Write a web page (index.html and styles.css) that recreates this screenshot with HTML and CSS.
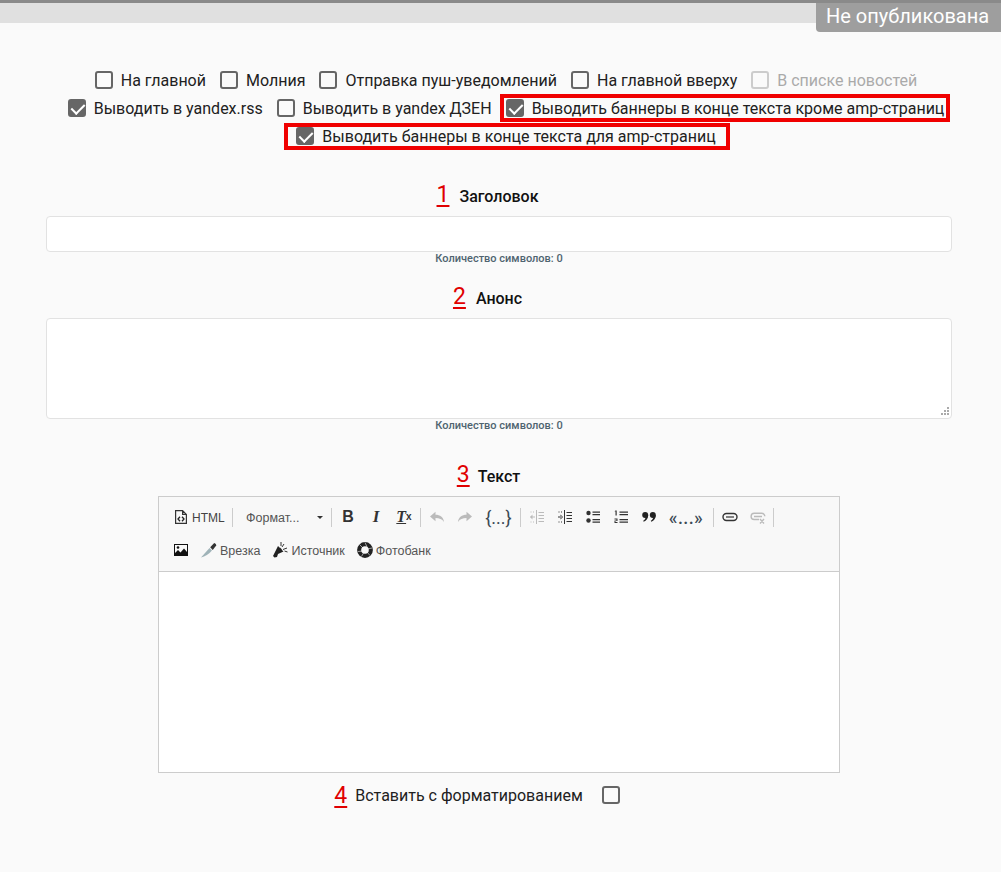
FILE: index.html
```html
<!DOCTYPE html>
<html lang="ru">
<head>
<meta charset="utf-8">
<title>Новость</title>
<link rel="stylesheet" href="styles.css">
</head>
<body>
<header class="topbar"><div class="status">Не опубликована</div></header>
<main class="page">
  <section class="options">
    <div class="opt-row">
      <label class="opt"><input class="cb" type="checkbox"><span>На главной</span></label>
      <label class="opt"><input class="cb" type="checkbox"><span>Молния</span></label>
      <label class="opt"><input class="cb" type="checkbox"><span>Отправка пуш-уведомлений</span></label>
      <label class="opt"><input class="cb" type="checkbox"><span>На главной вверху</span></label>
      <label class="opt opt-off"><input class="cb" type="checkbox" disabled><span>В списке новостей</span></label>
    </div>
    <div class="opt-row">
      <label class="opt"><input class="cb" type="checkbox" checked><span>Выводить в yandex.rss</span></label>
      <label class="opt"><input class="cb" type="checkbox"><span>Выводить в yandex ДЗЕН</span></label>
      <label class="opt mark-a"><input class="cb" type="checkbox" checked><span>Выводить баннеры в конце текста кроме amp-страниц</span></label>
    </div>
    <div class="opt-row">
      <label class="opt mark-b"><input class="cb" type="checkbox" checked><span>Выводить баннеры в конце текста для amp-страниц</span></label>
    </div>
  </section>

  <section class="field field-title">
    <h2 class="label"><span class="num">1</span>Заголовок</h2>
    <div class="input"></div>
    <p class="count">Количество символов: 0</p>
  </section>

  <section class="field field-lead">
    <h2 class="label"><span class="num">2</span>Анонс</h2>
    <div class="input area">
      <svg class="grip" width="9" height="9" viewBox="0 0 9 9"><path fill="#aaa" d="M7 0h2v2H7zM4 3h2v2H4zM7 3h2v2H7zM1 6h2v2H1zM4 6h2v2H4zM7 6h2v2H7z"/></svg>
    </div>
    <p class="count">Количество символов: 0</p>
  </section>

  <section class="field field-text">
    <h2 class="label"><span class="num num-3">3</span>Текст</h2>
    <div class="editor">
      <div class="toolbar">
        <div class="tb-row">
          <span class="btn btn-html">
            <svg width="14" height="16" viewBox="0 0 14 16"><path fill="none" stroke="#333" stroke-width="1.200" d="M1.600 1.600h7l3.800 3.800v9H1.600zM8.600 1.600v3.800h3.800"/><path fill="none" stroke="#222" stroke-width="1.300" d="M6 7.800 4 10l2 2.200M8 7.800l2 2.200-2 2.200"/></svg>
            <span class="t">HTML</span>
          </span>
          <i class="sep"></i>
          <span class="btn btn-format"><span class="t">Формат...</span><b class="caret"></b></span>
          <i class="sep"></i>
          <span class="btn ic-b">B</span>
          <span class="btn ic-i">I</span>
          <span class="btn ic-t"><span class="tx">T</span><sub>x</sub></span>
          <i class="sep"></i>
          <span class="btn"><svg width="16" height="16" viewBox="0 0 16 16"><path fill="#bbb" d="M1 7.500 6.500 2.800v3C11 5.800 14.500 8 15 13c-2-3-4.500-4-8.500-4v3.200z"/></svg></span>
          <span class="btn"><svg width="16" height="16" viewBox="0 0 16 16"><path fill="#bbb" d="M15 7.500 9.500 2.800v3C5 5.800 1.500 8 1 13c2-3 4.500-4 8.500-4v3.200z"/></svg></span>
          <span class="btn btn-braces">{...}</span>
          <i class="sep"></i>
          <span class="btn"><svg width="16" height="16" viewBox="0 0 16 16"><path fill="#bbb" d="M7 1h1v14H7zM9.500 3H15v1H9.500zM9.500 6H15v1H9.500zM9.500 9H15v1H9.500zM9.500 12H15v1H9.500zM1 7.500h5v1H1zM1 8l2.500-2.500v5zM1.500 2.500h1v1h-1zM4 2.500h1v1H4zM1.500 12.500h1v1h-1zM4 12.500h1v1H4z"/></svg></span>
          <span class="btn"><svg width="16" height="16" viewBox="0 0 16 16"><path fill="#333" d="M7 1h1v14H7zM9.500 3H15v1H9.500zM9.500 6H15v1H9.500zM9.500 9H15v1H9.500zM9.500 12H15v1H9.500zM1 7.500h4v1H1zM6 8 3.500 5.500v5zM1.500 2.500h1v1h-1zM4 2.500h1v1H4zM1.500 12.500h1v1h-1zM4 12.500h1v1H4z"/></svg></span>
          <span class="btn"><svg width="16" height="16" viewBox="0 0 16 16"><circle fill="#333" cx="3.500" cy="4" r="2.200"/><circle fill="#333" cx="3.500" cy="11.500" r="2.200"/><path fill="#333" d="M7.500 2.500H15v1.200H7.500zM7.500 5H15v1.200H7.500zM7.500 10H15v1.200H7.500zM7.500 12.500H15v1.200H7.500z"/></svg></span>
          <span class="btn"><svg width="16" height="16" viewBox="0 0 16 16"><path fill="#333" d="M6.500 2.500H15v1.200H6.500zM6.500 5H15v1.200H6.500zM6.500 10H15v1.200H6.500zM6.500 12.500H15v1.200H6.500zM2.500 1.500h1.200v5H2.500zM1.500 2.200l1-.7v1zM1.500 9.500h3v2.500h-2v1h2v1h-3v-2.500h2v-1h-2z"/></svg></span>
          <span class="btn"><svg width="16" height="16" viewBox="0 0 16 16"><g fill="#222"><circle cx="4.200" cy="6" r="3"/><circle cx="11.800" cy="6" r="3"/><path d="M7.200 6c0 3.500-1.800 5.700-4.500 6.800l-.5-1C4 10.800 4.800 9 4.800 7zM14.800 6c0 3.500-1.800 5.700-4.500 6.800l-.5-1c1.800-1 2.600-2.800 2.600-4.800z"/></g></svg></span>
          <span class="btn btn-guil">«...»</span>
          <i class="sep"></i>
          <span class="btn"><svg width="16" height="16" viewBox="0 0 16 16"><rect x="1" y="4.500" width="14" height="7" rx="3.500" fill="none" stroke="#333" stroke-width="1.400"/><path stroke="#333" stroke-width="1.200" d="M4 8h8"/></svg></span>
          <span class="btn"><svg width="16" height="16" viewBox="0 0 16 16"><path fill="none" stroke="#bbb" stroke-width="1.400" d="M9 10.500H4.200a3 3 0 0 1 0-6.200h7.600a3 3 0 0 1 3 3M4 7.500h8M10 10l4 4.500M14 10l-4 4.500"/></svg></span>
          <i class="sep sep-last"></i>
        </div>
        <div class="tb-row">
          <span class="btn btn-img"><svg width="16" height="16" viewBox="0 0 16 16"><path fill="#111" fill-rule="evenodd" d="M1 2h14v12H1zM2 3v8l3-3 2.500 2.500L11 6.500l3 3.500V3z"/><circle fill="#111" cx="5" cy="5.500" r="1.300"/></svg></span>
          <span class="btn btn-txt"><svg width="16" height="16" viewBox="0 0 16 16"><path fill="#9fb3b8" d="M0 15.500 8.500 6 11 8.500C8 12 4 14.500 0 15.500z"/><path fill="#333" d="m9.200 5.300 4-4.300c1.500.5 2 1.500 2 2.500L11.700 8z"/></svg><span class="t">Врезка</span></span>
          <span class="btn btn-txt"><svg width="16" height="16" viewBox="0 0 16 16"><path fill="#222" d="M2.500 15.500 1 14l5-10 5.500 5.500L6 12l-1 3zM8 5.500l2 2-1 .5-1.500-1.500z"/><path fill="none" stroke="#333" d="M9 0v4M12 2l-2 3M15 6l-4 1.500M15.500 10l-3-1"/></svg><span class="t">Источник</span></span>
          <span class="btn btn-txt"><svg width="16" height="16" viewBox="0 0 16 16"><circle cx="8" cy="8" r="7.900" fill="#222"/><circle cx="8" cy="8" r="3.800" fill="#f8f8f8"/><path stroke="#f8f8f8" stroke-width=".6" d="M8 .5 10 5M15 6l-4.500 1M13 13.500 10 10M4.500 14.500 6.500 11M1 9.500l4.500-.5M2.500 2.500 6 6"/></svg><span class="t">Фотобанк</span></span>
        </div>
      </div>
      <div class="editor-body"></div>
    </div>
  </section>

  <section class="paste">
    <span class="paste-label"><span class="num num-4">4</span>Вставить с форматированием</span>
    <input class="cb" type="checkbox">
  </section>
</main>
</body>
</html>
```
FILE: styles.css
```css
* { box-sizing: border-box; }
html, body { margin: 0; }
body {
  height: 872px;
  overflow: hidden;
  background: #fafafa;
  font-family: Roboto, "Liberation Sans", sans-serif;
  font-size: 16px;
  color: #212121;
}
.topbar {
  position: relative;
  height: 23px;
  background: #e0e0e0;
  border-top: 3px solid #8a8a8a;
}
.status {
  position: absolute;
  top: 0;
  right: 0;
  width: 185px;
  height: 29px;
  padding-left: 10px;
  background: #9e9e9e;
  border-bottom-left-radius: 4px;
  color: #fff;
  font-size: 20px;
  line-height: 26px;
}
.page { padding: 0 46px; width: 998px; }
.options {
  width: 920px;
  padding-top: 48px;
  display: flex;
  flex-direction: column;
  gap: 10px;
}
.opt-row { display: flex; justify-content: center; gap: 14px; height: 18px; }
.opt { position: relative; display: flex; align-items: center; gap: 8px; white-space: nowrap; }
.opt span { padding-top: 1px; line-height: 18px; }
.opt-off { color: #aaa; }
.cb {
  appearance: none;
  position: relative;
  flex: none;
  width: 18px;
  height: 18px;
  margin: 0;
  background: transparent;
  border: 2px solid #666;
  border-radius: 3px;
}
.cb:disabled { border-color: #ccc; }
.cb:checked { background: #666; }
.cb:checked::after {
  content: "";
  position: absolute;
  left: 4px;
  top: 0;
  width: 6px;
  height: 11px;
  border: solid #fff;
  border-width: 0 2px 2px 0;
  transform: rotate(45deg);
}
.mark-a::after, .mark-b::after {
  content: "";
  position: absolute;
  border: 4px solid #f00000;
  pointer-events: none;
}
.mark-a::after { left: -6px; right: -6px; top: -5px; bottom: -5px; }
.mark-b::after { left: -12px; right: -14px; top: -4px; bottom: -5px; }

.field { width: 906px; display: flex; flex-direction: column; align-items: center; }
.field-title { margin-top: 42px; }
.field-lead { margin-top: 24px; }
.field-text { margin-top: 35px; }
.label {
  position: relative;
  margin: 0 0 9px;
  font-size: 16px;
  font-weight: 500;
  line-height: 20px;
  color: #111;
}
.num {
  position: absolute;
  right: 100%;
  bottom: 0;
  margin-right: 10px;
  color: #e00000;
  font-size: 23px;
  font-weight: 400;
  line-height: 24px;
  text-decoration: underline;
  text-underline-offset: 3px;
  text-decoration-thickness: 2px;
}
.num-3 { margin-right: 8px; }
.num-4 { margin-right: 8px; bottom: -3px; }
.input {
  position: relative;
  width: 100%;
  height: 36px;
  background: #fff;
  border: 1px solid #e2e2e2;
  border-radius: 4px;
}
.area { height: 101px; }
.grip { position: absolute; right: 2px; bottom: 2px; }
.count {
  margin: 0;
  padding-top: 1px;
  font-size: 11px;
  font-weight: 500;
  line-height: 12px;
  color: #4f6470;
}
.editor { width: 682px; border: 1px solid #ccc; background: #fff; }
.toolbar {
  height: 75px;
  padding: 6px 0 0 6px;
  background: #f8f8f8;
  border-bottom: 1px solid #ccc;
  font-family: "Liberation Sans", Arial, sans-serif;
  font-size: 12.500px;
  color: #444;
}
.tb-row { display: flex; align-items: center; height: 28px; margin-bottom: 5px; }
.btn { display: flex; align-items: center; justify-content: center; flex: none; width: 28px; height: 28px; }
.t { padding-top: 1px; }
.sep { flex: none; width: 1px; height: 19px; margin: 0 2px; background: #ccc; }
.sep-last { margin-left: 1px; }
.btn-html { width: 65px; justify-content: flex-start; gap: 4px; padding-left: 9px; font-size: 12px; color: #444; }
.btn-format { position: relative; width: 94px; justify-content: flex-start; padding-left: 11px; color: #555; }
.caret {
  position: absolute;
  left: 82px;
  top: 13px;
  border: 3px solid transparent;
  border-top-color: #333;
  border-bottom: 0;
}
.ic-b { font-size: 16px; font-weight: 700; color: #333; }
.ic-i { font-family: "Liberation Serif", serif; font-size: 17px; font-weight: 700; font-style: italic; color: #333; }
.ic-t { font-family: "Liberation Serif", serif; font-size: 16px; font-weight: 700; font-style: italic; color: #333; }
.tx { text-decoration: underline; }
.ic-t sub { font-family: "Liberation Sans", sans-serif; font-size: 10px; font-weight: 700; font-style: normal; line-height: 0; }
.btn-braces { width: 39px; font-family: Roboto, sans-serif; font-size: 18px; color: #3c4a55; }
.btn-guil { width: 48px; padding-right: 2px; font-family: Roboto, sans-serif; font-size: 18px; font-weight: 500; letter-spacing: .4px; color: #3c4a55; }
.btn-img { margin-left: 2px; }
.btn-txt { width: auto; padding: 0 6px; gap: 3px; color: #555; }
.editor-body { height: 200px; background: #fff; }
.paste {
  display: flex;
  align-items: center;
  justify-content: center;
  gap: 19px;
  width: 906px;
  margin-top: 13px;
  padding-right: 23px;
  height: 18px;
}
.paste-label { position: relative; padding-top: 1px; line-height: 18px; }
```
